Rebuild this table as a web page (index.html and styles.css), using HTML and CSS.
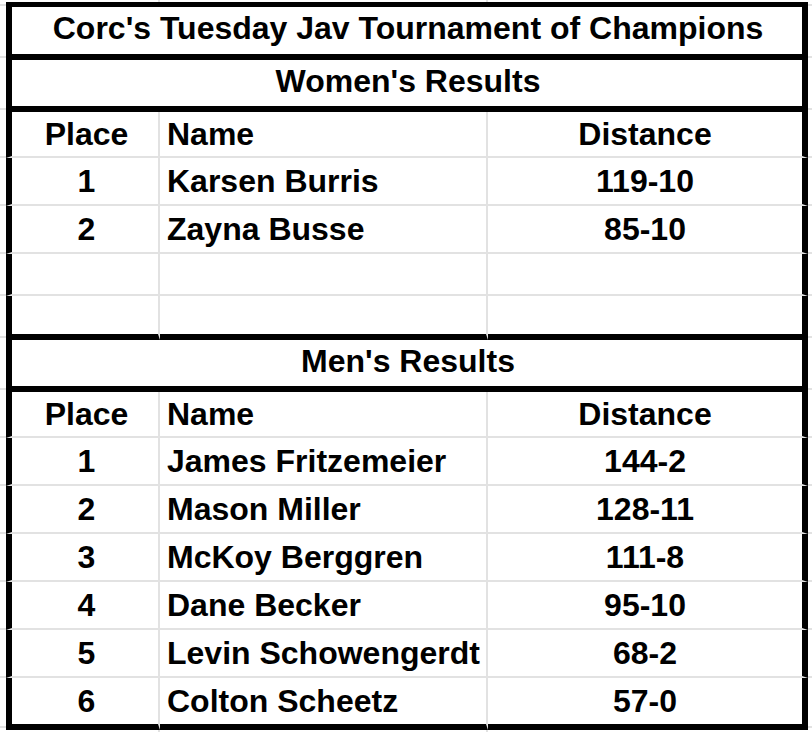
FILE: index.html
```html
<!DOCTYPE html>
<html>
<head>
<meta charset="utf-8">
<link rel="stylesheet" href="styles.css">
</head>
<body>
<div class="sheet">
  <div class="row strip">
    <div class="g"></div><div class="c place"></div><div class="c name"></div><div class="c dist"></div><div class="g"></div>
  </div>

  <div class="row title-row first">
    <div class="g"></div><div class="c span thick">Corc's Tuesday Jav Tournament of Champions</div><div class="g"></div>
  </div>
  <div class="row section-row">
    <div class="g"></div><div class="c span thick">Women's Results</div><div class="g"></div>
  </div>

  <div class="row head-row">
    <div class="g"></div><div class="c place">Place</div><div class="c name">Name</div><div class="c dist">Distance</div><div class="g"></div>
  </div>
  <div class="row data-row">
    <div class="g"></div><div class="c place">1</div><div class="c name">Karsen Burris</div><div class="c dist">119-10</div><div class="g"></div>
  </div>
  <div class="row data-row">
    <div class="g"></div><div class="c place">2</div><div class="c name">Zayna Busse</div><div class="c dist">85-10</div><div class="g"></div>
  </div>
  <div class="row empty-row">
    <div class="g"></div><div class="c place"></div><div class="c name"></div><div class="c dist"></div><div class="g"></div>
  </div>
  <div class="row empty-row last-empty">
    <div class="g"></div><div class="c place thick"></div><div class="c name thick"></div><div class="c dist thick"></div><div class="g"></div>
  </div>

  <div class="row section-row">
    <div class="g"></div><div class="c span thick">Men's Results</div><div class="g"></div>
  </div>

  <div class="row head-row men-head">
    <div class="g"></div><div class="c place">Place</div><div class="c name">Name</div><div class="c dist">Distance</div><div class="g"></div>
  </div>
  <div class="row data-row">
    <div class="g"></div><div class="c place">1</div><div class="c name">James Fritzemeier</div><div class="c dist">144-2</div><div class="g"></div>
  </div>
  <div class="row data-row">
    <div class="g"></div><div class="c place">2</div><div class="c name">Mason Miller</div><div class="c dist">128-11</div><div class="g"></div>
  </div>
  <div class="row data-row">
    <div class="g"></div><div class="c place">3</div><div class="c name">McKoy Berggren</div><div class="c dist">111-8</div><div class="g"></div>
  </div>
  <div class="row data-row">
    <div class="g"></div><div class="c place">4</div><div class="c name">Dane Becker</div><div class="c dist">95-10</div><div class="g"></div>
  </div>
  <div class="row data-row">
    <div class="g"></div><div class="c place">5</div><div class="c name">Levin Schowengerdt</div><div class="c dist">68-2</div><div class="g"></div>
  </div>
  <div class="row data-row last-data">
    <div class="g"></div><div class="c place thick">6</div><div class="c name thick">Colton Scheetz</div><div class="c dist thick">57-0</div><div class="g"></div>
  </div>

  <div class="row strip">
    <div class="g"></div><div class="c place"></div><div class="c name"></div><div class="c dist"></div><div class="g"></div>
  </div>
</div>
</body>
</html>
```

FILE: styles.css
```css
* { box-sizing: border-box; }

html, body {
  margin: 0;
  padding: 0;
  background: #ffffff;
}

.sheet {
  width: 812px;
  height: 732px;
  overflow: hidden;
  font-family: "Liberation Sans", Arial, sans-serif;
  font-weight: bold;
  font-size: 32px;
  color: #000;
}

.row {
  display: grid;
  grid-template-columns: 6px 154px 328px 320px 4px;
}

.g {
  border-bottom: 2px solid #e2e2e2;
}

.c {
  display: flex;
  align-items: center;
  border-bottom: 2px solid #e2e2e2;
  white-space: nowrap;
  line-height: 1;
  padding-bottom: 1px;
}

.place {
  justify-content: center;
  padding-left: 3px;
  border-left: 6px solid #000;
  border-right: 2px solid #e2e2e2;
}

.name {
  justify-content: flex-start;
  padding-left: 7px;
  border-right: 2px solid #e2e2e2;
}

.dist {
  justify-content: center;
  border-right: 6px solid #000;
}

.span {
  grid-column: 2 / 5;
  justify-content: center;
  padding-left: 2px;
  padding-bottom: 5px;
  border-left: 6px solid #000;
  border-right: 6px solid #000;
}

.c.thick {
  border-bottom: 6px solid #000;
}

.row:has(.thick) .g {
  margin-bottom: 2px;
}

/* strips above and below the table */
.strip { height: 2px; }
.strip .c { border-left: 0; border-bottom: 0; padding: 0; }
.strip .dist { border-right: 0; }
.strip .g { border-bottom: 0; }

.first .span {
  border-top: 5px solid #000;
  height: 58px;
}
.first .g {
  border-top: 2px solid #e2e2e2;
  margin-top: 2px;
}

.title-row { height: 58px; }
.section-row { height: 52px; }
.head-row { height: 46px; }
.men-head { height: 46px; }
.data-row { height: 48px; }
.empty-row { height: 42px; }
.last-empty { height: 44px; }
.last-data { height: 52px; }
```
